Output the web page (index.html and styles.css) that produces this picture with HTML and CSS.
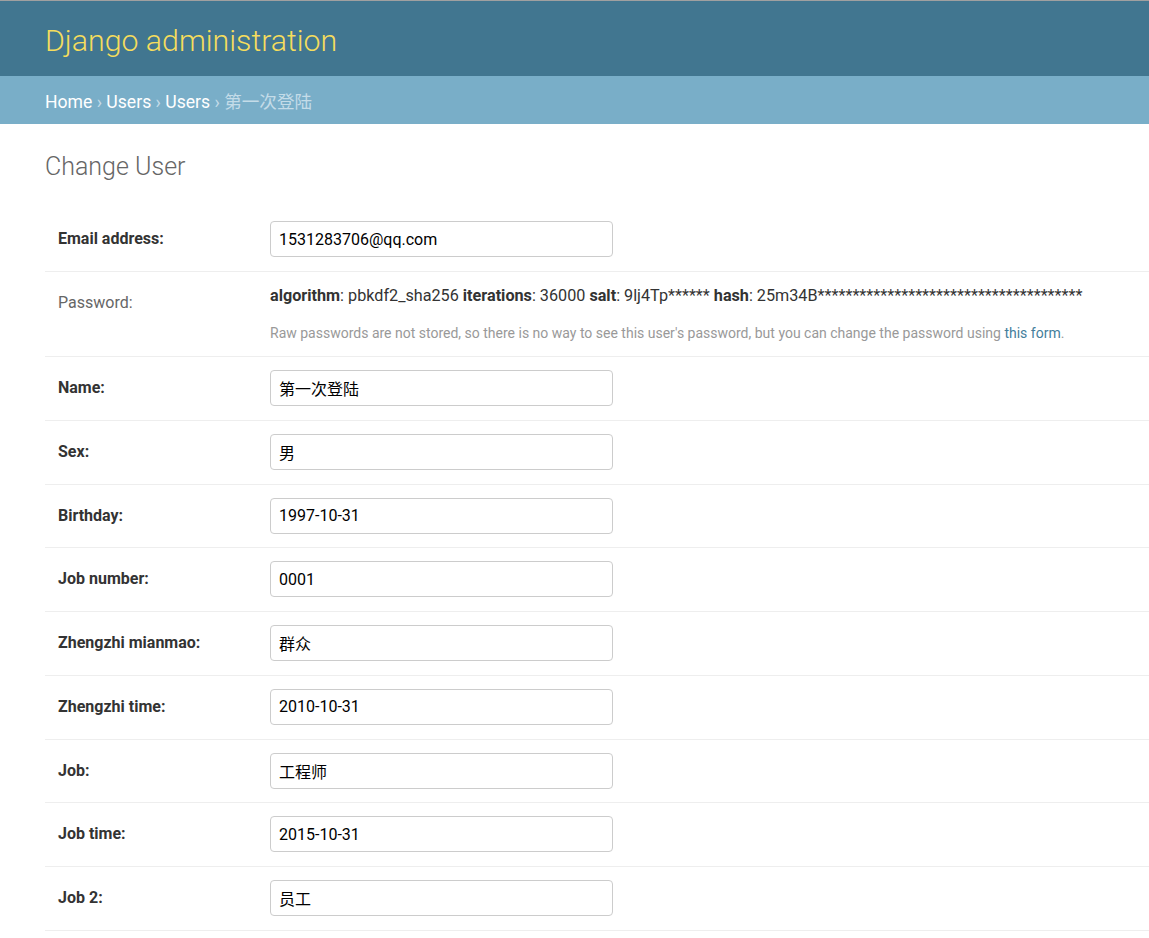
FILE: index.html
```html
<!DOCTYPE html>
<html>
<head>
<meta charset="UTF-8">
<title>Change User | Django site admin</title>
<link rel="stylesheet" href="styles.css">
</head>
<body>
	<div class="header">
		<h1 class="branding">Django administration</h1>
	</div>
	<div class="breadcrumbs">
		<a href="javascript:;">Home</a> &rsaquo; <a href="javascript:;">Users</a> &rsaquo; <a href="javascript:;">Users</a> &rsaquo; 第一次登陆
	</div>
	<div class="content">
		<h1 class="title">Change User</h1>
		<form>
			<div class="form-row">
				<label class="required">Email address:</label>
				<input class="vTextField" type="text" value="1531283706@qq.com">
			</div>
			<div class="form-row">
				<label>Password:</label>
				<div class="readonly">
					<div class="hash"><strong>algorithm</strong>: pbkdf2_sha256 <strong>iterations</strong>: 36000 <strong>salt</strong>: 9lj4Tp****** <strong>hash</strong>: 25m34B**************************************</div>
					<p class="help">Raw passwords are not stored, so there is no way to see this user's password, but you can change the password using <a href="javascript:;">this form</a>.</p>
				</div>
			</div>
			<div class="form-row">
				<label class="required">Name:</label>
				<input class="vTextField" type="text" value="第一次登陆">
			</div>
			<div class="form-row">
				<label class="required">Sex:</label>
				<input class="vTextField" type="text" value="男">
			</div>
			<div class="form-row">
				<label class="required">Birthday:</label>
				<input class="vTextField" type="text" value="1997-10-31">
			</div>
			<div class="form-row">
				<label class="required">Job number:</label>
				<input class="vTextField" type="text" value="0001">
			</div>
			<div class="form-row">
				<label class="required">Zhengzhi mianmao:</label>
				<input class="vTextField" type="text" value="群众">
			</div>
			<div class="form-row">
				<label class="required">Zhengzhi time:</label>
				<input class="vTextField" type="text" value="2010-10-31">
			</div>
			<div class="form-row">
				<label class="required">Job:</label>
				<input class="vTextField" type="text" value="工程师">
			</div>
			<div class="form-row">
				<label class="required">Job time:</label>
				<input class="vTextField" type="text" value="2015-10-31">
			</div>
			<div class="form-row">
				<label class="required">Job 2:</label>
				<input class="vTextField" type="text" value="员工">
			</div>
		</form>
	</div>
</body>
</html>
```

FILE: styles.css
```css
*{margin: 0;padding: 0;box-sizing: border-box;}
body{font-family: Roboto, "Noto Sans CJK SC", "Liberation Sans", sans-serif;color: #333;background: #fff;}
a{text-decoration: none;}

/* header */
.header{height: 76px;background: #417690;border-top: 1px solid #a0a0a0;
	display: flex;align-items: center;padding: 3px 45px 0;}
.branding{font-size: 30.3px;font-weight: 300;color: #f5dd5d;}

/* breadcrumbs */
.breadcrumbs{height: 48px;line-height: 48px;background: #79aec8;padding: 2px 45px 0;
	font-size: 17.6px;color: #c4dce8;}
.breadcrumbs a{color: #fff;}

/* content */
.content{padding-left: 45px;}
.title{font-size: 25px;font-weight: 300;color: #666;padding: 28px 0 26px;line-height: 30px;}

.form-row{display: flex;align-items: flex-start;padding: 13px 13px 13.7px;border-bottom: 1px solid #eee;}
.form-row label{width: 212px;flex: none;line-height: 36px;font-size: 16px;color: #666;}
.form-row label.required{font-weight: bold;color: #333;}

.vTextField{width: 343px;height: 36px;border: 1px solid #ccc;border-radius: 4px;
	padding: 0 8px;font-family: Roboto, "Noto Sans CJK SC", sans-serif;font-size: 16px;color: #000;}

.readonly{padding-top: 1px;}
.readonly .hash{font-size: 16.2px;line-height: 20px;color: #333;}
.readonly .help{font-size: 14px;line-height: 20px;color: #999;margin-top: 17px;}
.readonly .help a{color: #447e9b;}
```
